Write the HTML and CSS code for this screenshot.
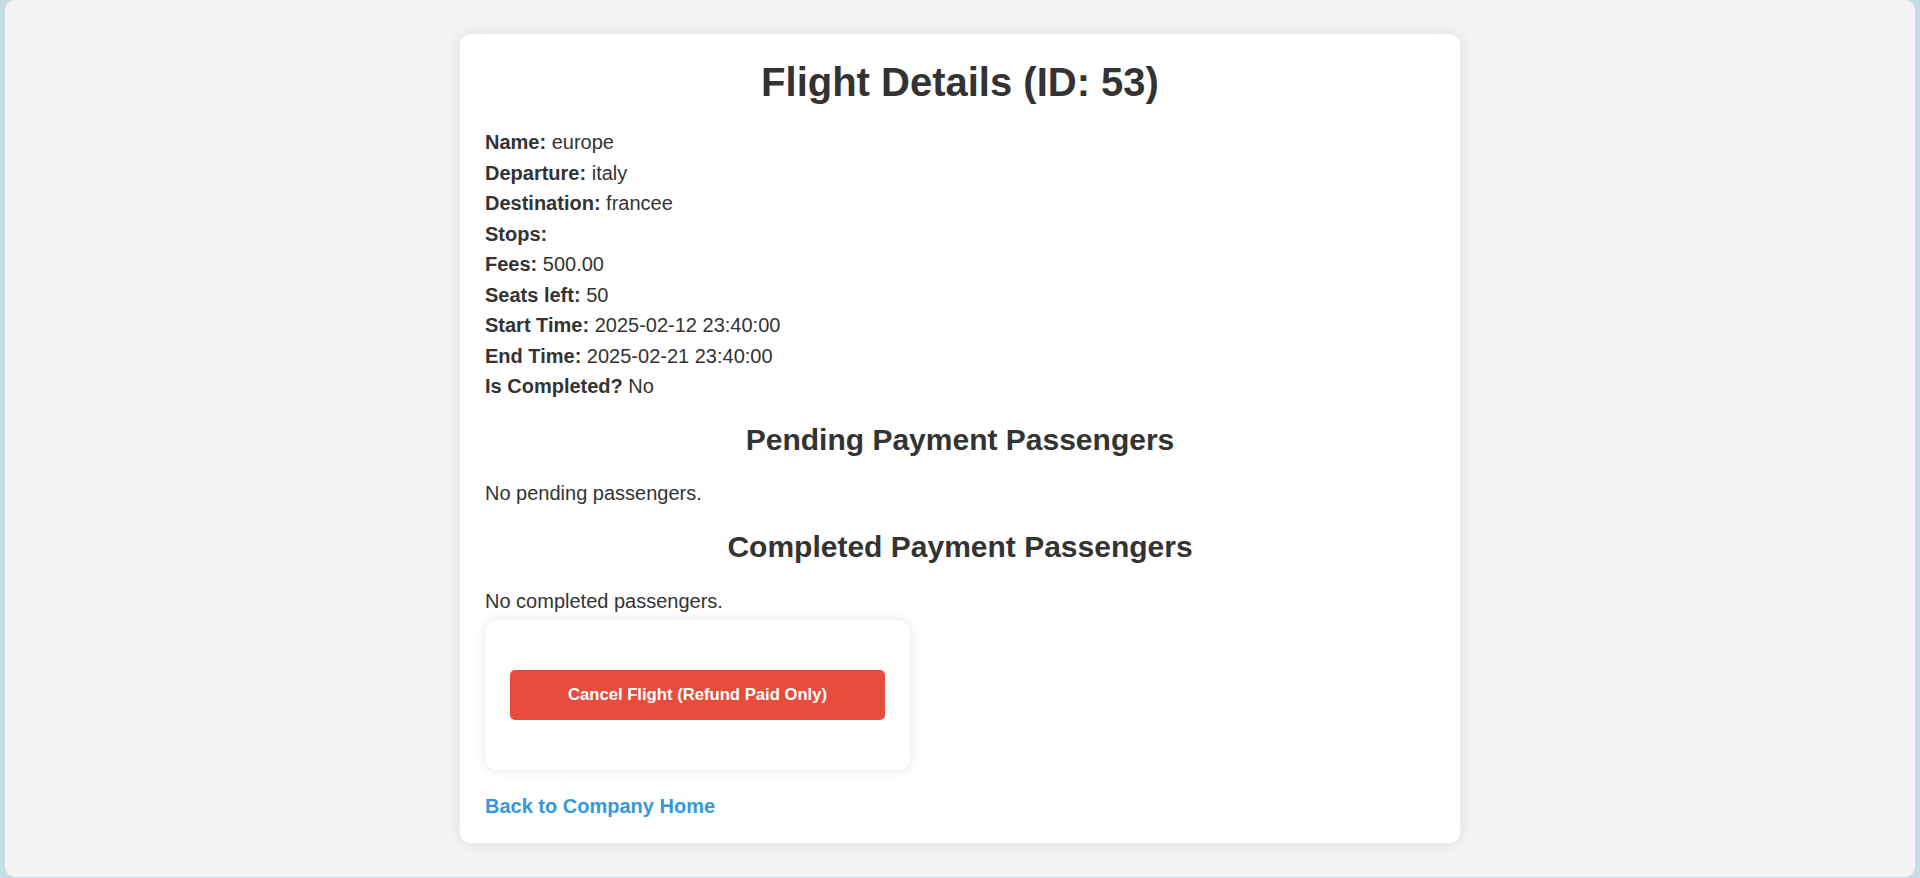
FILE: index.html
```html
<!DOCTYPE html>
<html lang="en">
<head>
<meta charset="utf-8">
<title>Flight Details</title>
<link rel="stylesheet" href="styles.css">
</head>
<body>
<div class="frame">
  <main class="card">
    <h1 class="title">Flight Details (ID: 53)</h1>
    <p class="line"><strong>Name:</strong> europe</p>
    <p class="line"><strong>Departure:</strong> italy</p>
    <p class="line"><strong>Destination:</strong> francee</p>
    <p class="line"><strong>Stops:</strong> </p>
    <p class="line"><strong>Fees:</strong> 500.00</p>
    <p class="line"><strong>Seats left:</strong> 50</p>
    <p class="line"><strong>Start Time:</strong> 2025-02-12 23:40:00</p>
    <p class="line"><strong>End Time:</strong> 2025-02-21 23:40:00</p>
    <p class="line"><strong>Is Completed?</strong> No</p>

    <h2 class="section">Pending Payment Passengers</h2>
    <p class="line">No pending passengers.</p>

    <h2 class="section">Completed Payment Passengers</h2>
    <p class="line">No completed passengers.</p>

    <div class="action-box">
      <form class="action-form">
        <button type="button" class="btn-cancel">Cancel Flight (Refund Paid Only)</button>
      </form>
    </div>

    <a class="back-link" href="#">Back to Company Home</a>
  </main>
</div>
</body>
</html>
```

FILE: styles.css
```css
html {
  background: #c6dee3;
  margin: 0;
  padding: 0;
}

body {
  margin: 0;
  padding: 0;
}

.frame {
  margin: 0 5px;
  height: 877px;
  box-sizing: border-box;
  padding-top: 34px;
  background: #f4f4f4;
  border-radius: 10px;
  font-family: "Liberation Sans", Arial, sans-serif;
  color: #333;
  overflow: hidden;
}

.card {
  width: 950px;
  margin: 0 auto;
  padding: 25px;
  background: #fff;
  border-radius: 10px;
  box-shadow: 0 0 15px rgba(0, 0, 0, 0.1);
  display: flow-root;
}

.title {
  margin: 0 0 26px;
  font-size: 40px;
  font-weight: bold;
  line-height: 46px;
  text-align: center;
  color: #333;
}

.line {
  margin: 7.5px 0;
  font-size: 20px;
  line-height: 23px;
}

.line strong {
  font-weight: bold;
}

.section {
  margin: 24.9px 0;
  font-size: 30px;
  font-weight: bold;
  line-height: 34.5px;
  text-align: center;
  color: #333;
}

.action-box {
  width: 375px;
  margin: 5px 0 25px;
  padding: 50px 25px;
  background: #fff;
  border-radius: 12px;
  box-shadow: 0 0 12px rgba(0, 0, 0, 0.1);
}

.action-form {
  margin: 0;
}

.btn-cancel {
  display: block;
  width: 375px;
  height: 50px;
  margin: 0;
  padding: 0;
  border: none;
  border-radius: 5px;
  background: #e74c3c;
  color: #fff;
  font-family: "Liberation Sans", Arial, sans-serif;
  font-size: 16.67px;
  font-weight: bold;
  cursor: pointer;
}

.back-link {
  display: block;
  width: max-content;
  font-size: 20px;
  font-weight: bold;
  line-height: 23px;
  color: #3498db;
  text-decoration: none;
}
```
